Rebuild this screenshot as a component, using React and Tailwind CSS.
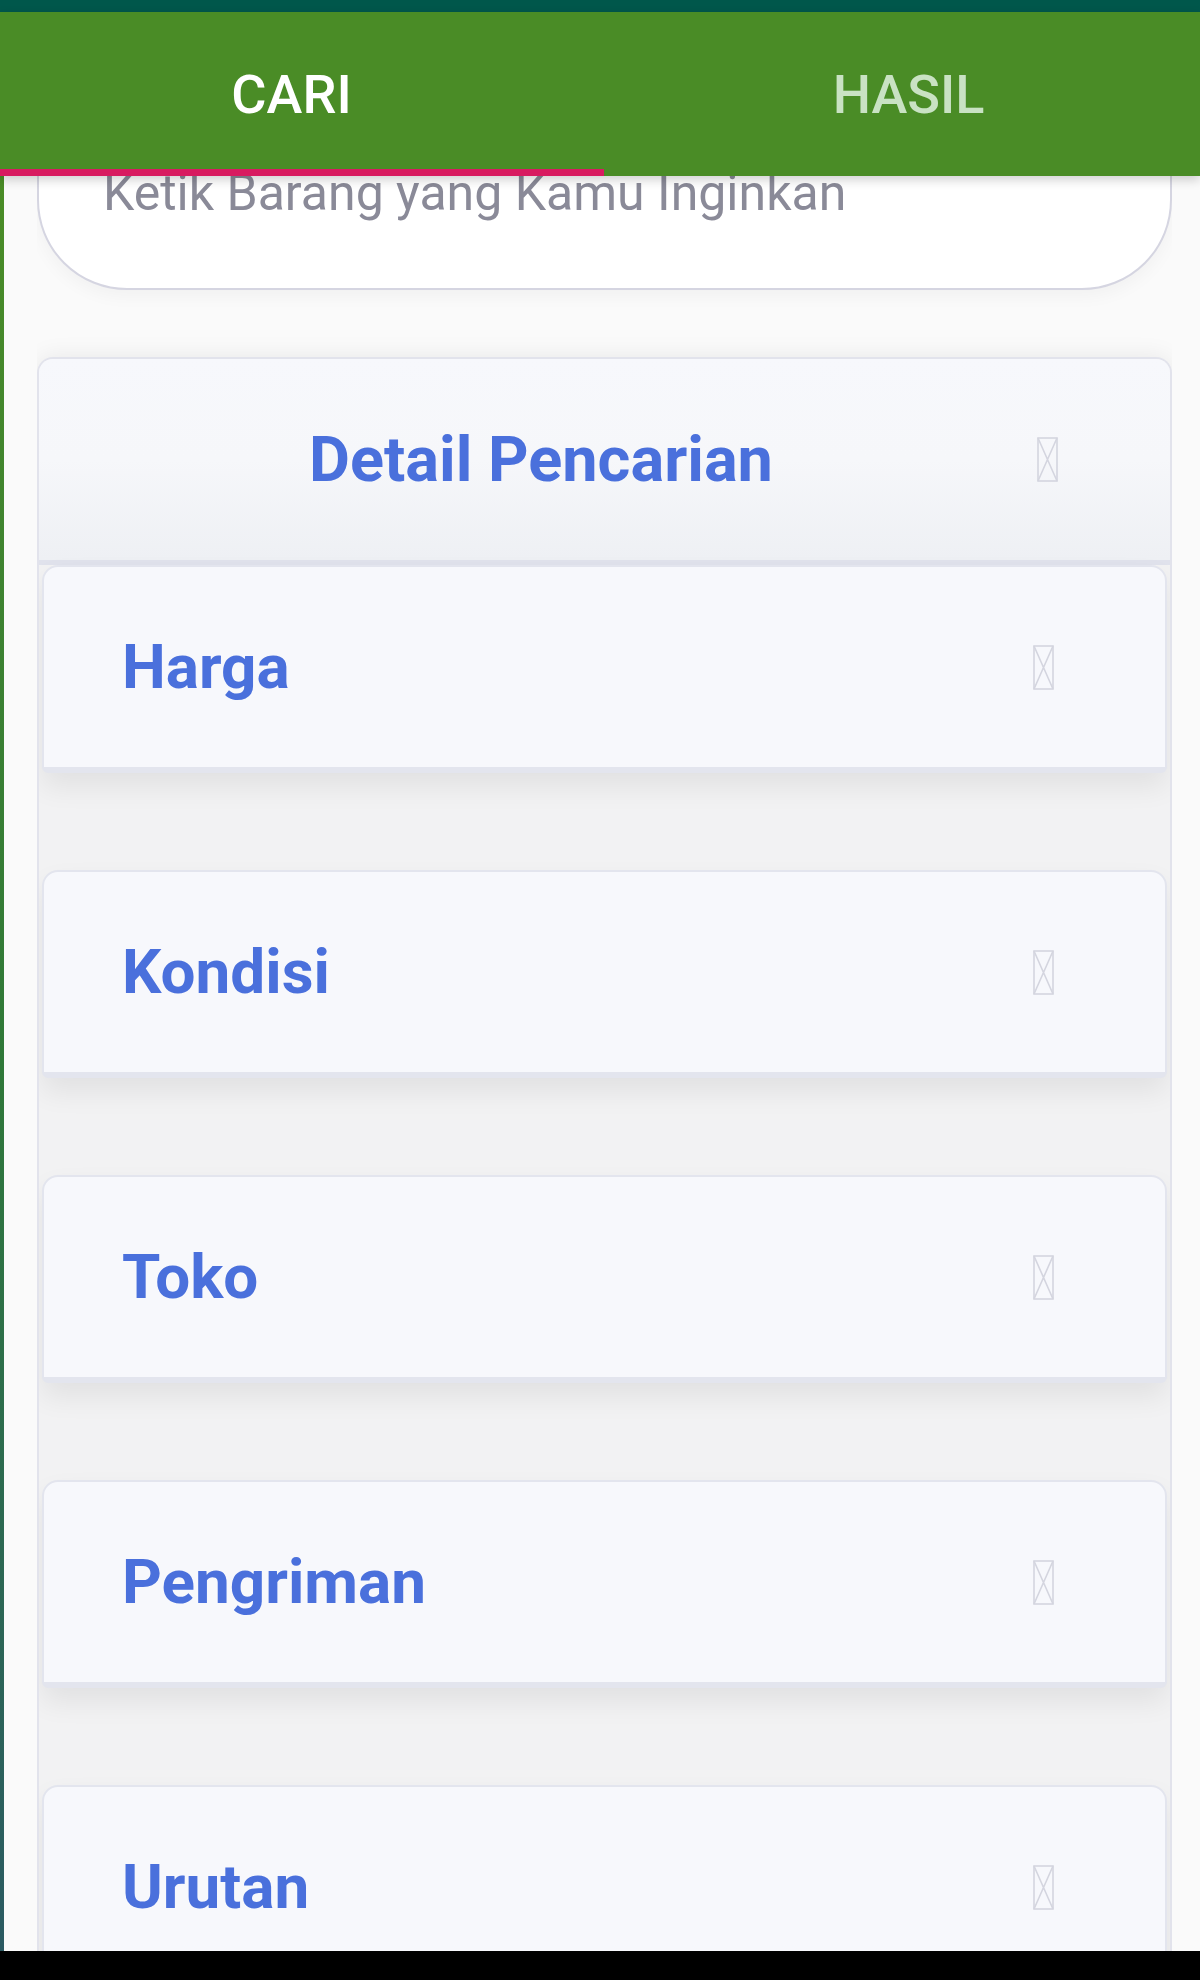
import React from 'react';

const filters = ['Harga', 'Kondisi', 'Toko', 'Pengriman', 'Urutan'];

const MissingGlyph = () => (
  <svg width="21" height="45" viewBox="0 0 21 45" fill="none" stroke="#d4d5df" strokeWidth="1.6">
    <rect x="1" y="1" width="19" height="43" />
    <path d="M1 1 L20 44 M20 1 L1 44" />
  </svg>
);

const FilterCard = ({ label }) => (
  <div className="h-[208px] mb-[97px] shrink-0 flex items-center bg-[#f7f8fc] border-2 border-b-[6px] border-[#e3e5ee] rounded-t-[16px] rounded-b-[6px] shadow-[0_14px_28px_rgba(0,0,0,0.07)]">
    <span className="flex-1 pl-[78px] text-[62px] font-bold text-[#4a70dc] leading-none">{label}</span>
    <div className="mr-[111px]">
      <MissingGlyph />
    </div>
  </div>
);

export default function App() {
  return (
    <div className="w-[1200px] h-[1980px] flex flex-col overflow-hidden bg-[#fafafa]" style={{ fontFamily: 'Roboto, "Noto Sans", sans-serif' }}>
      <div className="h-[12px] bg-[#00574b] shrink-0" />

      {/* tabs */}
      <div className="relative z-10 h-[164px] shrink-0 flex bg-[#4a8c26] shadow-[0_4px_10px_rgba(0,0,0,0.18)]">
        <div className="flex-1 flex items-center justify-center pr-[12px] text-[54px] font-medium text-white">CARI</div>
        <div className="flex-1 flex items-center justify-center pl-[22px] text-[54px] font-medium text-[#c9e2c3]">HASIL</div>
        <div className="absolute left-0 bottom-0 w-[604px] h-[7px] bg-[#d81b60]" />
      </div>

      <div className="flex-1 flex overflow-hidden">
        <div className="w-[4px] shrink-0 bg-gradient-to-b from-[#4a8c26] via-[#2f7838] to-[#2b5a62]" />

        <div className="flex-1 flex flex-col ml-[33px] mr-[28px] overflow-hidden">
          {/* search box, scrolled partly under the tabs */}
          <div className="-mt-[100px] h-[214px] shrink-0 bg-white border-2 border-[#d5d5e1] rounded-[90px] pt-[86px] pl-[64px] shadow-[0_6px_18px_rgba(0,0,0,0.04)]">
            <span className="text-[50px] leading-[58px] text-[#8a8a98]">Ketik Barang yang Kamu Inginkan</span>
          </div>

          {/* detail pencarian */}
          <div className="mt-[67px] flex-1 flex flex-col bg-[#f2f2f3] border-2 border-b-0 border-[#e2e3ec] rounded-t-[16px] shadow-[0_0_24px_rgba(0,0,0,0.08)] overflow-hidden">
            <div className="h-[206px] shrink-0 flex items-center bg-gradient-to-b from-[#f7f8fc] via-[#f6f7fa] to-[#eef0f4] border-b-[5px] border-[#e0e2ec]">
              <span className="flex-1 pl-[6px] text-center text-[63px] font-bold text-[#4a70dc] leading-none">Detail Pencarian</span>
              <div className="mr-[112px]">
                <MissingGlyph />
              </div>
            </div>
            <div className="flex flex-col px-[3px]">
              {filters.map((f) => (
                <FilterCard key={f} label={f} />
              ))}
            </div>
          </div>
        </div>
      </div>

      <div className="h-[29px] shrink-0 bg-black" />
    </div>
  );
}
